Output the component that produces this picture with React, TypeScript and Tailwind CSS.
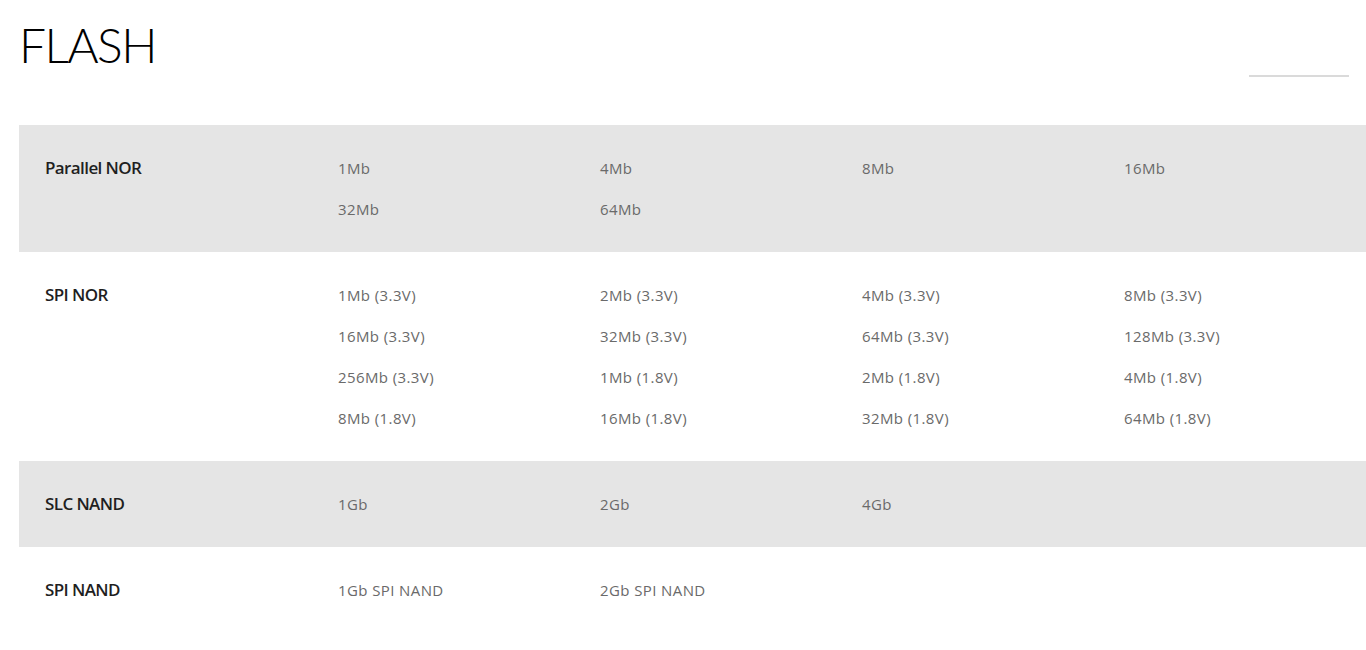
import React from "react";

type Row = { label: string; items: string[]; shaded: boolean };

const rows: Row[] = [
  { label: "Parallel NOR", items: ["1Mb", "4Mb", "8Mb", "16Mb", "32Mb", "64Mb"], shaded: true },
  {
    label: "SPI NOR",
    items: [
      "1Mb (3.3V)", "2Mb (3.3V)", "4Mb (3.3V)", "8Mb (3.3V)",
      "16Mb (3.3V)", "32Mb (3.3V)", "64Mb (3.3V)", "128Mb (3.3V)",
      "256Mb (3.3V)", "1Mb (1.8V)", "2Mb (1.8V)", "4Mb (1.8V)",
      "8Mb (1.8V)", "16Mb (1.8V)", "32Mb (1.8V)", "64Mb (1.8V)",
    ],
    shaded: false,
  },
  { label: "SLC NAND", items: ["1Gb", "2Gb", "4Gb"], shaded: true },
  { label: "SPI NAND", items: ["1Gb SPI NAND", "2Gb SPI NAND"], shaded: false },
];

export default function App() {
  return (
    <div className="w-[1366px] h-[650px] overflow-hidden bg-white">
      <div className="flex items-start justify-between pl-[19px] pr-[17px] pt-[17px] h-[125px]">
        <h1 className="font-['Lato',sans-serif] font-light text-[48px] leading-[56px] text-black tracking-[-1.6px]">FLASH</h1>
        <div className="mt-[58px] w-[100px] h-[2px] bg-[#dadada]" />
      </div>

      <div className="ml-[19px]">
        {rows.map((row) => (
          <div key={row.label} className={`flex pt-[22px] pb-[23px] ${row.shaded ? "bg-[#e5e5e5]" : "bg-white"}`}>
            <div className="w-[319px] shrink-0 pl-[26px] h-[41px] flex items-center pt-[1px]">
              <span className="font-['Open_Sans',sans-serif] font-semibold text-[17px] tracking-[-0.6px] text-[#1f1f1f]">{row.label}</span>
            </div>
            <div className="grid grid-cols-[262px_262px_262px_262px] shrink-0">
              {row.items.map((it, i) => (
                <div key={i} className="h-[41px] flex items-center pt-[2px]">
                  <span className="font-['Open_Sans',sans-serif] text-[15px] tracking-[0.4px] text-[#6a6a6a]">{it}</span>
                </div>
              ))}
            </div>
          </div>
        ))}
      </div>
    </div>
  );
}
